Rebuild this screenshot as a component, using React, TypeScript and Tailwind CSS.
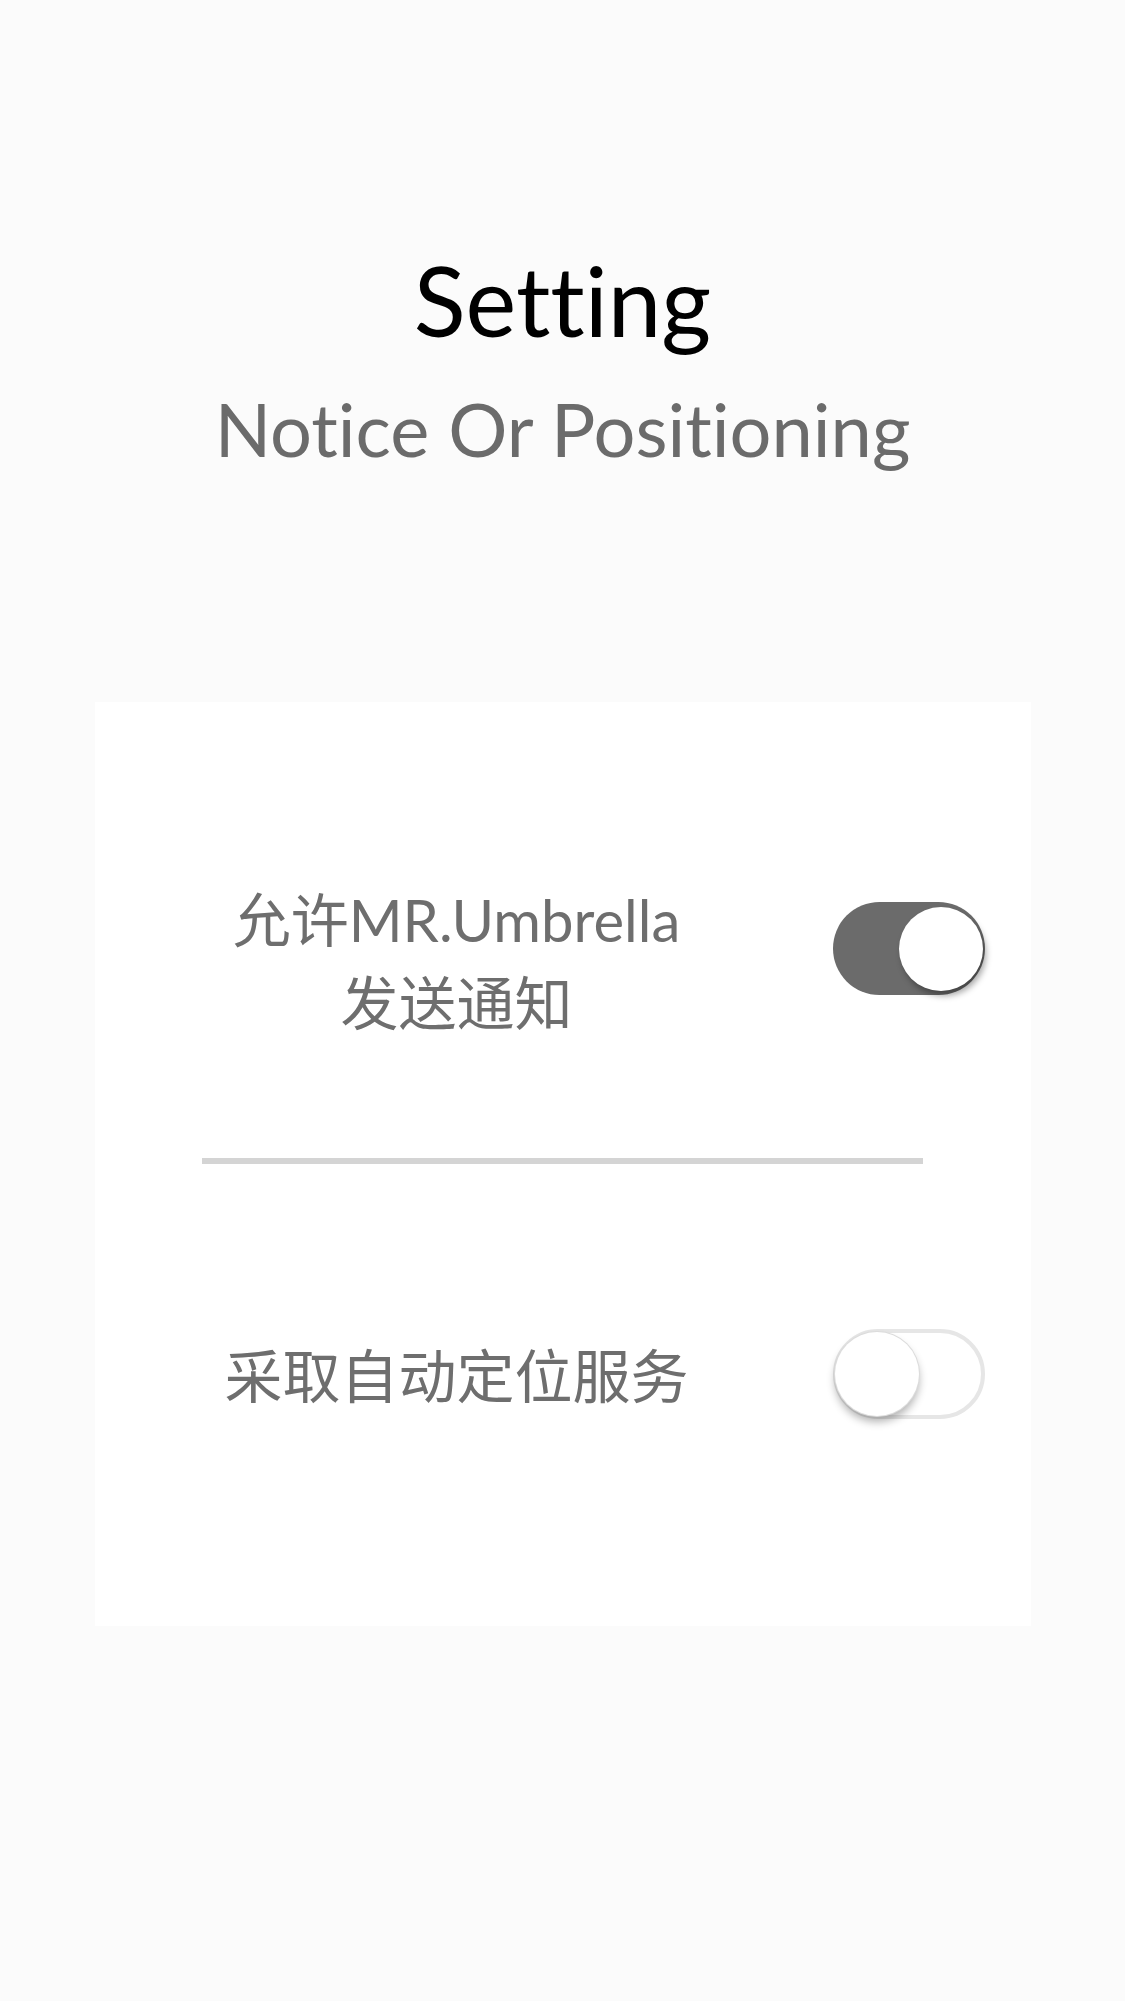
import { useState } from "react";

function Toggle({ on, onChange }: { on: boolean; onChange: () => void }) {
  return (
    <button
      type="button"
      onClick={onChange}
      className={`relative w-[152px] shrink-0 rounded-full transition ${
        on ? "h-[93px] bg-[#6b6b6b]" : "h-[90px] border-[4px] border-[#e6e6e6] bg-white"
      }`}
    >
      <span
        className={`absolute top-1/2 h-[84px] w-[84px] -translate-y-1/2 rounded-full bg-white ${
          on
            ? "right-[2px] shadow-[3px_5px_6px_rgba(0,0,0,0.35)]"
            : "left-[-2px] shadow-[0_6px_8px_rgba(0,0,0,0.3)] ring-1 ring-[#dcdcdc]"
        }`}
      />
    </button>
  );
}

export default function App() {
  const [notify, setNotify] = useState(true);
  const [locate, setLocate] = useState(false);

  return (
    <div className="min-h-[2001px] w-full bg-[#fbfbfb] pt-[252px] font-['Lato','Noto_Sans_CJK_SC',sans-serif] [font-variant-ligatures:none]">
      <h1 className="text-center text-[96px] leading-none text-black">Setting</h1>
      <p className="mt-[44px] text-center text-[74px] leading-none text-[#6b6b6b]">
        Notice Or Positioning
      </p>

      <div className="mx-auto mt-[236px] h-[924px] w-[936px] bg-white">
        <div className="flex items-start pl-[104px] pt-[176px] pb-[114px]">
          <div className="w-[516px] text-center text-[58px] leading-[83px] text-[#6e6e6e]">
            <div>允许MR.Umbrella</div>
            <div>发送通知</div>
          </div>
          <div className="ml-[118px] mt-[24px]">
            <Toggle on={notify} onChange={() => setNotify(!notify)} />
          </div>
        </div>

        <div className="mx-auto h-[6px] w-[721px] bg-[#d4d4d4]" />

        <div className="flex items-center pl-[104px] pt-[165px]">
          <div className="w-[516px] text-center text-[58px] leading-[83px] text-[#6e6e6e]">
            采取自动定位服务
          </div>
          <div className="ml-[118px]">
            <Toggle on={locate} onChange={() => setLocate(!locate)} />
          </div>
        </div>
      </div>
    </div>
  );
}
